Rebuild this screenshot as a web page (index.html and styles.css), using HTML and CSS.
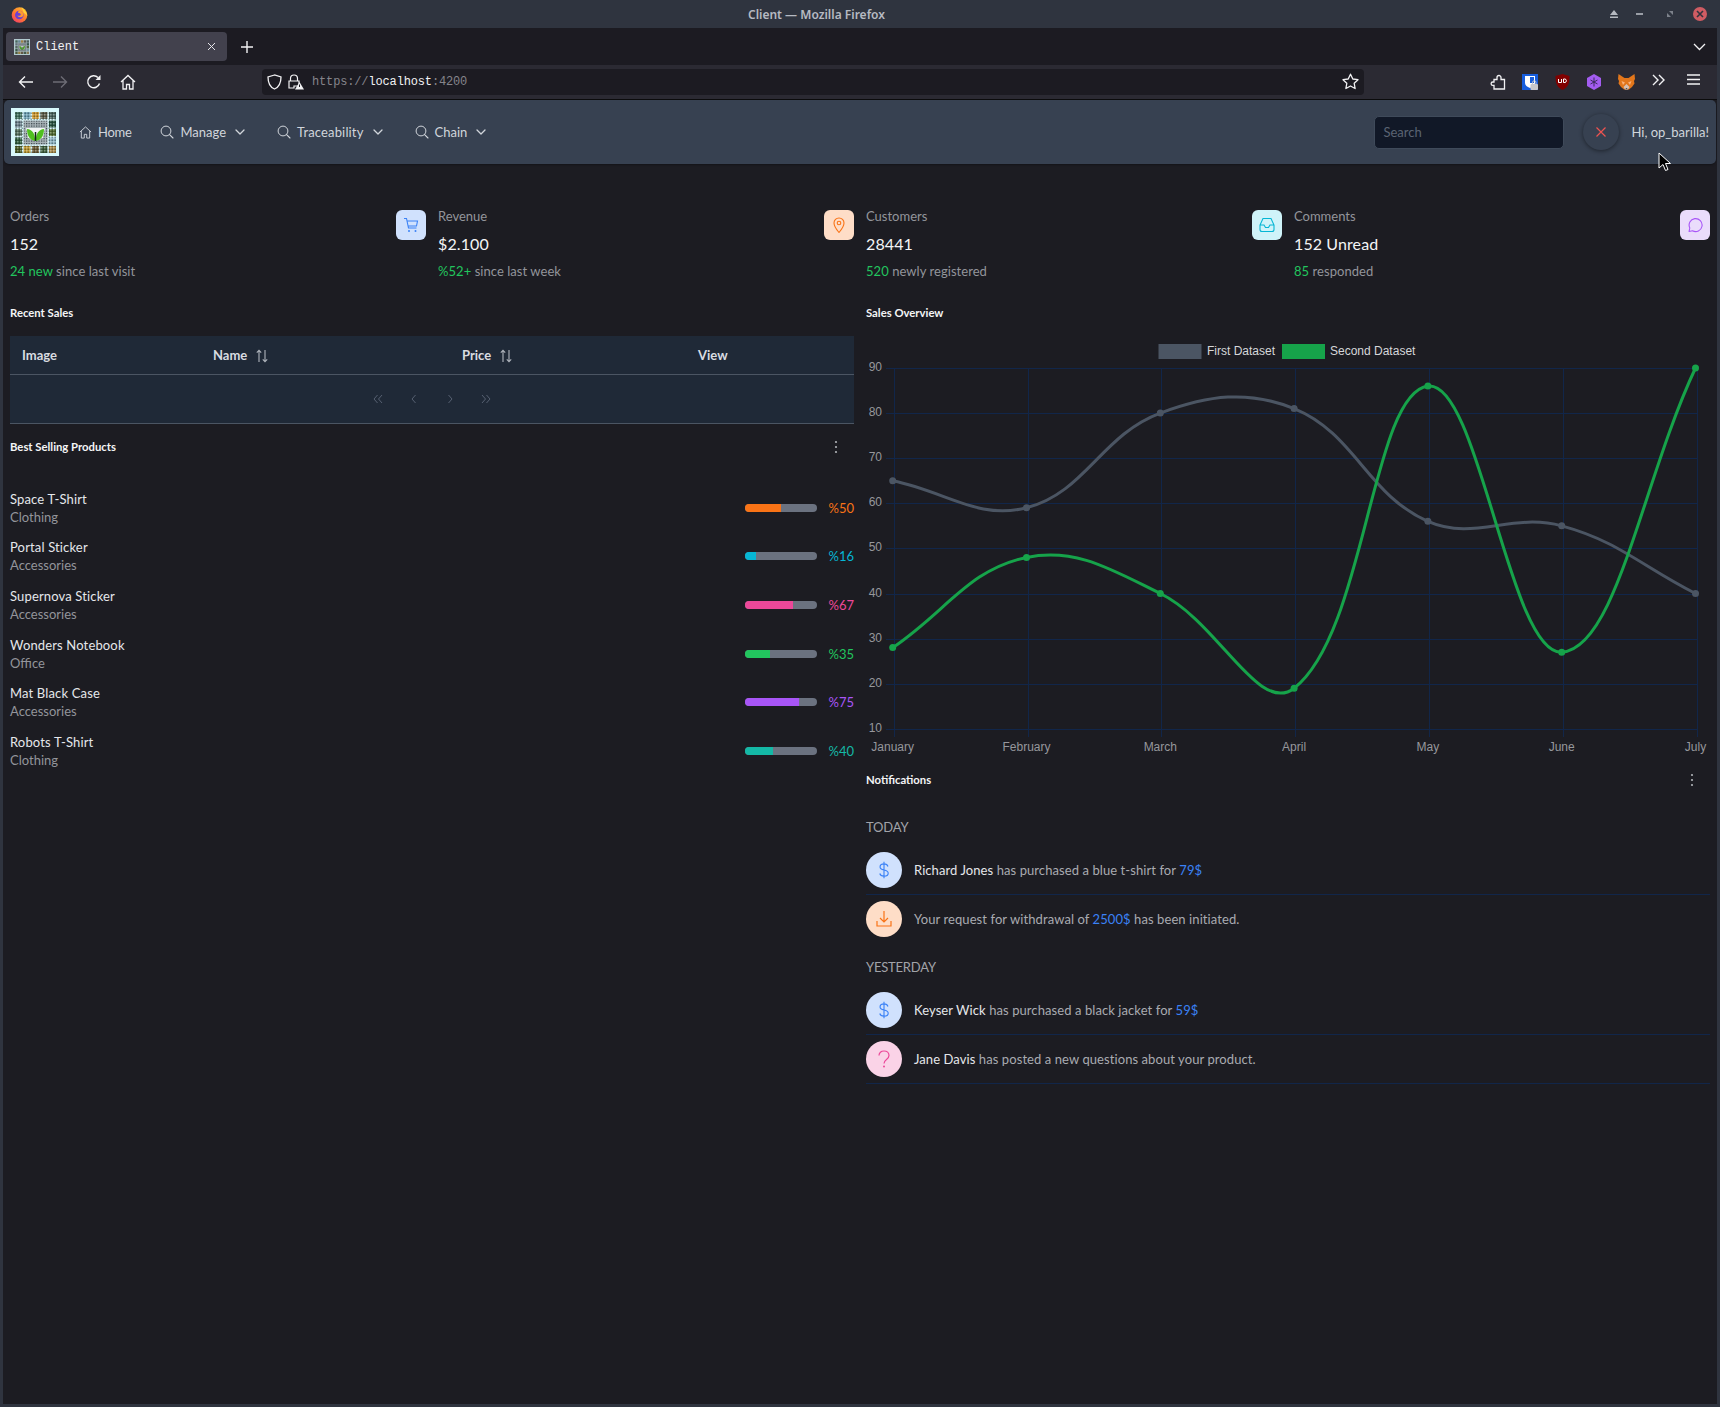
FILE: index.html
```html
<!DOCTYPE html>
<html lang="en">
<head>
    <meta charset="UTF-8">
    <title>Client — Mozilla Firefox</title>
    <link rel="stylesheet" href="styles.css">
</head>
<body>
    <!-- Shared drawings -->
    <svg class="defs">
        <defs>
            <pattern id="grain" width="3" height="3" patternUnits="userSpaceOnUse">
                <rect width="1.500" height="1.500" fill="#e8eef0" opacity="0.4"/>
                <rect x="1.500" y="1.500" width="1.500" height="1.500" fill="#10181a" opacity="0.4"/>
            </pattern>
            <pattern id="qr" width="2.500" height="2.500" patternUnits="userSpaceOnUse">
                <rect width="2.500" height="2.500" fill="#a9b4b8"/>
                <rect width="1.250" height="1.250" fill="#3c464c"/>
            </pattern>
            <linearGradient id="ffRing" x1="0.800" y1="0" x2="0.100" y2="1">
                <stop offset="0" stop-color="#ffbd2e"/>
                <stop offset="0.5" stop-color="#ff7a2e"/>
                <stop offset="1" stop-color="#f2386e"/>
            </linearGradient>
        </defs>
        <symbol id="logo" viewBox="0 0 48 48">
            <rect width="48" height="48" fill="#d8f8fb"/>
            <rect x="4" y="4" width="7" height="7" fill="#3f6f5c"/><rect x="12.500" y="4" width="7" height="7" fill="#6fa3b8"/><rect x="21" y="4" width="7" height="7" fill="#d09a30"/><rect x="29.500" y="4" width="7" height="7" fill="#5c5a46"/><rect x="38" y="4" width="7" height="7" fill="#46605a"/>
            <rect x="4" y="12.500" width="7" height="7" fill="#6b7f8a"/><rect x="38" y="12.500" width="7" height="7" fill="#24503c"/>
            <rect x="4" y="21" width="7" height="7" fill="#56715e"/><rect x="38" y="21" width="7" height="7" fill="#4f6b2f"/>
            <rect x="4" y="29.500" width="7" height="7" fill="#2d5a3a"/><rect x="38" y="29.500" width="7" height="7" fill="#8cb4c4"/>
            <rect x="4" y="38" width="7" height="7" fill="#4a5a24"/><rect x="12.500" y="38" width="7" height="7" fill="#c09a30"/><rect x="21" y="38" width="7" height="7" fill="#6a5a34"/><rect x="29.500" y="38" width="7" height="7" fill="#3c5c38"/><rect x="38" y="38" width="7" height="7" fill="#a88a48"/>
            <rect x="4" y="4" width="41" height="41" fill="url(#grain)"/>
            <rect x="12.500" y="12.500" width="24" height="24" fill="url(#qr)"/>
            <path d="M15 20h19l-2 10-7.500 3L17 30z" fill="#f2f5f5"/>
            <path d="M24.200 33c-5.500-1-8.200-5-8.200-12 5 .5 8.200 4 8.200 12zM24.800 33c5.500-1 8.200-5 8.200-12-5 .5-8.200 4-8.200 12z" fill="#4fc01f"/>
            <path d="M24.500 33v-9" stroke="#142018" stroke-width="1.500"/>
        </symbol>
        <symbol id="search" viewBox="0 0 14 14"><circle cx="6" cy="6" r="4.900" fill="none" stroke="currentColor" stroke-width="1"/><path d="M9.600 9.600 13 13" stroke="currentColor" stroke-width="1.100" stroke-linecap="round"/></symbol>
        <symbol id="chevron" viewBox="0 0 10 6"><path d="M1 1l4 4 4-4" fill="none" stroke="currentColor" stroke-width="1.300" stroke-linecap="round" stroke-linejoin="round"/></symbol>
        <symbol id="sort" viewBox="0 0 14 14"><path d="M4 13V1.500M1.800 3.600 4 1.200l2.200 2.400M10 1v11.500M7.800 10.400l2.200 2.400 2.200-2.400" fill="none" stroke="currentColor" stroke-width="1.100"/></symbol>
        <symbol id="kebab" viewBox="0 0 4 14"><circle cx="2" cy="2" r="1.100" fill="currentColor"/><circle cx="2" cy="7" r="1.100" fill="currentColor"/><circle cx="2" cy="12" r="1.100" fill="currentColor"/></symbol>
        <symbol id="dollar" viewBox="0 0 16 20"><path d="M12.500 6C12 4 10.300 3 8 3S3.500 4.300 3.500 6.500 5.500 9.500 8 10s4.800 1.300 4.800 3.600S10.500 17 8 17s-4.300-1-4.800-3M8 .5v19" fill="none" stroke="currentColor" stroke-width="1.300"/></symbol>
    </svg>

    <div class="window">
        <!-- Window title -->
        <div class="titlebar">
            <svg class="ff-logo" width="17" height="17" viewBox="0 0 17 17"><circle cx="8.500" cy="9" r="7.800" fill="url(#ffRing)"/><path d="M10 0c.5 1.500 1.500 2 3 3.500s3 3.500 3.300 6.500c-1-1.500-2-2.500-3.500-3-.5-2-1.500-4-2.800-7z" fill="#ffd23a"/><circle cx="8.300" cy="9" r="4.300" fill="#6b3fd4"/><path d="M8.300 4.700c2 0 3.600 1.200 4.200 3 .2 2-1 3.500-3 3.500-1.500 0-2.700-.6-3.200-1.700 1.500.7 3.200.3 3.500-.8.200-1-1.200-1.600-2.300-1.600-.8-.7-.5-1.700.8-2.400z" fill="#ff9a2e"/></svg>
            <div class="title-text">Client — Mozilla Firefox</div>
            <div class="win-buttons">
                <svg width="10" height="10" viewBox="0 0 10 10"><path d="M5 1l4 5H1zM1 7.500h8V9H1z" fill="#b5b9c0"/></svg>
                <svg class="win-min" width="8" height="8" viewBox="0 0 8 8"><rect y="3" width="7" height="2" fill="#9a9ea6"/></svg>
                <svg class="win-max" width="8" height="8" viewBox="0 0 8 8"><path d="M3 1h4v4zM1 3l4 4H1z" fill="#7d828b"/></svg>
                <span class="win-close"><svg width="8" height="8" viewBox="0 0 8 8"><path d="M1 1l6 6M7 1 1 7" stroke="#2f343f" stroke-width="1.600"/></svg></span>
            </div>
        </div>

        <!-- Tabs -->
        <div class="tabstrip">
            <div class="tab">
                <svg class="favicon" width="16" height="16"><use href="#logo"/></svg>
                <span class="tab-title">Client</span>
                <svg class="tab-close" width="9" height="9" viewBox="0 0 9 9"><path d="M1 1l7 7M8 1 1 8" stroke="#e6e6ea" stroke-width="1"/></svg>
            </div>
            <svg class="new-tab" width="12" height="12" viewBox="0 0 12 12"><path d="M6 0v12M0 6h12" stroke="#f2f2f4" stroke-width="1.400"/></svg>
            <svg class="tab-list" width="13" height="8" viewBox="0 0 13 8"><path d="M1 1l5.500 5.500L12 1" fill="none" stroke="#f2f2f4" stroke-width="1.300"/></svg>
        </div>

        <!-- Browser toolbar -->
        <div class="toolbar">
            <span class="tool"><svg width="16" height="14" viewBox="0 0 16 14"><path d="M15 7H2M7 1.500 1.500 7 7 12.500" fill="none" stroke="#f2f2f4" stroke-width="1.400"/></svg></span>
            <span class="tool"><svg width="16" height="14" viewBox="0 0 16 14"><path d="M1 7h13M9 1.500 14.500 7 9 12.500" fill="none" stroke="#6d6c75" stroke-width="1.400"/></svg></span>
            <span class="tool"><svg width="16" height="16" viewBox="0 0 16 16"><path d="M13.500 9.500A6 6 0 1 1 12 3.500" fill="none" stroke="#f2f2f4" stroke-width="1.400"/><path d="M14.500 1v5h-5z" fill="#f2f2f4"/></svg></span>
            <span class="tool"><svg width="16" height="16" viewBox="0 0 16 16"><path d="M1 8l7-6.500L15 8M3 6.500V15h3.500v-4.500h3V15H13V6.500" fill="none" stroke="#f2f2f4" stroke-width="1.300"/></svg></span>
            <div class="urlbar">
                <svg width="15" height="16" viewBox="0 0 15 16"><path d="M7.500 1 1 3c0 6 1.500 10 6.500 12 5-2 6.500-6 6.500-12z" fill="none" stroke="#f2f2f4" stroke-width="1.300"/></svg>
                <svg class="url-lock" width="16" height="16" viewBox="0 0 16 16"><path d="M2.500 7V4.500a3.500 3.500 0 0 1 7 0V7M1 7h10v5H6v2H1z" fill="none" stroke="#f2f2f4" stroke-width="1.200"/><path d="M11.500 8 16 15.500H7z" fill="#f2f2f4"/><path d="M11.500 10.500v2.500" stroke="#1c1b22"/></svg>
                <span class="url-text">https://<b>localhost</b>:4200</span>
                <svg class="url-star" width="17" height="17" viewBox="0 0 17 17"><path d="M8.500 1.200 10.800 6l5.200.7-3.800 3.600.9 5.200-4.600-2.500-4.600 2.500.9-5.200L1 6.700 6.200 6z" fill="none" stroke="#f2f2f4" stroke-width="1.300" stroke-linejoin="round"/></svg>
            </div>
            <div class="ext-icons">
                <span class="tool-ext"><svg width="16" height="16" viewBox="0 0 16 16"><path d="M4 15H14.500V5.500H11V3.500a2 2 0 0 0-4 0v2H4V8H2.800a1.700 1.700 0 0 0 0 3.400H4z" fill="none" stroke="#f2f2f4" stroke-width="1.300"/></svg></span>
                <span class="tool-ext"><svg width="16" height="16" viewBox="0 0 16 16"><rect width="16" height="16" fill="#175ddc"/><path d="M3 2h10v7c0 2-2 4-5 5-3-1-5-3-5-5z" fill="#fff"/><path d="M8 3h4v6H8z" fill="#175ddc"/><rect x="8.500" y="10" width="7.500" height="6" rx="1" fill="#c8c8cc"/><path d="M10.500 10V8.500a1.700 1.700 0 0 1 3.500 0V10" fill="none" stroke="#c8c8cc"/></svg></span>
                <span class="tool-ext"><svg width="15" height="16" viewBox="0 0 15 16"><path d="M7.500 0 14.500 2c0 7-1 11-7 14-6-3-7-7-7-14z" fill="#800000"/><path d="M3.500 5v3.500h3V5M8.500 5v3.500h1.500a1.800 1.800 0 0 0 0-3.500z" fill="none" stroke="#fff" stroke-width="1"/></svg></span>
                <span class="tool-ext"><svg width="16" height="16" viewBox="0 0 16 16"><path d="M8 0l7 4v8l-7 4-7-4V4z" fill="#a35cf0"/><path d="M8 3.500v9M4.500 6l7 4M11.500 6l-7 4" stroke="#3a2a5a" stroke-width="1"/></svg></span>
                <span class="tool-ext"><svg width="17" height="16" viewBox="0 0 17 16"><path d="M.5 0 6.500 4h4l6-4 .5 5-1 2 .5 2.500L14 13l-3 2.500H6L3 13 .5 9.500 1 7 0 5z" fill="#e2761b"/><path d="M3.500 7 7 8.500 5 11zM13.500 7 10 8.500l2 2.500z" fill="#f9b27a"/><path d="M5.500 13l3-3 3 3-1.500 2.500H7z" fill="#d7c1b3"/><path d="M7.300 14h2.400l-1.200 1z" fill="#233447"/></svg></span>
                <span class="tool-ext"><svg width="14" height="12" viewBox="0 0 14 12"><path d="M1 1l5 5-5 5M7 1l5 5-5 5" fill="none" stroke="#f2f2f4" stroke-width="1.400"/></svg></span>
                <span class="tool-ext tool-menu"><svg width="13" height="11" viewBox="0 0 13 11"><path d="M0 1h13M0 5.500h13M0 10h13" stroke="#f2f2f4" stroke-width="1.300"/></svg></span>
            </div>
        </div>

        <div class="app">
            <!-- Topbar -->
            <nav class="navbar">
                <svg class="logo" width="48" height="48"><use href="#logo"/></svg>
                <a class="nav-item nav-first"><svg width="13" height="13" viewBox="0 0 14 14"><path d="M1 6.500 7 1l6 5.500M2.500 5.500V13h3.200V9h2.600v4h3.200V5.500" fill="none" stroke="currentColor" stroke-width="1"/></svg>Home</a>
                <a class="nav-item"><svg width="14" height="14"><use href="#search"/></svg>Manage<svg class="chev" width="10" height="6"><use href="#chevron"/></svg></a>
                <a class="nav-item nav-trace"><svg width="14" height="14"><use href="#search"/></svg>Traceability<svg class="chev" width="10" height="6"><use href="#chevron"/></svg></a>
                <a class="nav-item"><svg width="14" height="14"><use href="#search"/></svg>Chain<svg class="chev" width="10" height="6"><use href="#chevron"/></svg></a>
                <input class="nav-search" type="text" placeholder="Search">
                <button class="nav-close"><svg width="12" height="12" viewBox="0 0 12 12"><path d="M1.500 1.500l9 9M10.500 1.500l-9 9" stroke="#ef5350" stroke-width="1.200"/></svg></button>
                <span class="nav-user">Hi, op_barilla!</span>
            </nav>

            <main class="dashboard">
                <!-- Stat cards -->
                <section class="stats">
                    <div class="stat">
                        <div class="stat-body">
                            <div class="stat-label">Orders</div>
                            <div class="stat-value">152</div>
                            <div class="stat-sub"><span class="good">24 new</span> since last visit</div>
                        </div>
                        <div class="stat-icon bg-blue"><svg width="16" height="16" viewBox="0 0 16 16"><path d="M1 1.500h2.500l2 9.500h8M4 4h10.500l-1 5H5.200" fill="none" stroke="currentColor" stroke-width="1.100"/><circle cx="6" cy="14" r="1" fill="currentColor"/><circle cx="12.500" cy="14" r="1" fill="currentColor"/></svg></div>
                    </div>
                    <div class="stat">
                        <div class="stat-body">
                            <div class="stat-label">Revenue</div>
                            <div class="stat-value">$2.100</div>
                            <div class="stat-sub"><span class="good">%52+</span> since last week</div>
                        </div>
                        <div class="stat-icon bg-orange"><svg width="16" height="16" viewBox="0 0 16 16"><path d="M8 15.500C5 12 3 9 3 6a5 5 0 0 1 10 0c0 3-2 6-5 9.500z" fill="none" stroke="currentColor" stroke-width="1.100"/><circle cx="8" cy="6" r="1.800" fill="none" stroke="currentColor" stroke-width="1.100"/></svg></div>
                    </div>
                    <div class="stat">
                        <div class="stat-body">
                            <div class="stat-label">Customers</div>
                            <div class="stat-value">28441</div>
                            <div class="stat-sub"><span class="good">520</span> newly registered</div>
                        </div>
                        <div class="stat-icon bg-cyan"><svg width="16" height="16" viewBox="0 0 16 16"><path d="M4 1.500h8L15 8v4.500a2 2 0 0 1-2 2H3a2 2 0 0 1-2-2V8zM1 8h4l1.500 2.500h3L11 8h4" fill="none" stroke="currentColor" stroke-width="1.100"/></svg></div>
                    </div>
                    <div class="stat">
                        <div class="stat-body">
                            <div class="stat-label">Comments</div>
                            <div class="stat-value">152 Unread</div>
                            <div class="stat-sub"><span class="good">85</span> responded</div>
                        </div>
                        <div class="stat-icon bg-purple"><svg width="16" height="16" viewBox="0 0 16 16"><path d="M2 14.500l.8-3.500A6.500 6.500 0 1 1 5.500 13.800z" fill="none" stroke="currentColor" stroke-width="1.100" stroke-linejoin="round"/></svg></div>
                    </div>
                </section>

                <section class="column">
                    <h5 class="section-title">Recent Sales</h5>
                    <table class="sales-table">
                        <thead>
                            <tr>
                                <th class="col-image">Image</th>
                                <th class="col-name">Name <svg class="sort" width="14" height="14"><use href="#sort"/></svg></th>
                                <th class="col-price">Price <svg class="sort" width="14" height="14"><use href="#sort"/></svg></th>
                                <th class="col-view">View</th>
                            </tr>
                        </thead>
                        <tfoot>
                            <tr>
                                <td colspan="4">
                                    <div class="pager">
                                        <svg width="10" height="10" viewBox="0 0 10 10"><path d="M4.500 1 1 5l3.500 4M9 1 5.500 5 9 9"/></svg>
                                        <svg width="10" height="10" viewBox="0 0 10 10"><path d="M6.500 1 3 5l3.500 4"/></svg>
                                        <svg width="10" height="10" viewBox="0 0 10 10"><path d="M3.500 1 7 5 3.500 9"/></svg>
                                        <svg width="10" height="10" viewBox="0 0 10 10"><path d="M1 1l3.500 4L1 9M5.500 1 9 5 5.500 9"/></svg>
                                    </div>
                                </td>
                            </tr>
                        </tfoot>
                    </table>

                    <div class="section-head products-head">
                        <h5 class="section-title">Best Selling Products</h5>
                        <svg class="kebab" width="4" height="14"><use href="#kebab"/></svg>
                    </div>
                    <ul class="products">
                        <li class="product">
                            <div><div class="product-name">Space T-Shirt</div><div class="product-cat">Clothing</div></div>
                            <div class="product-rate c-orange"><div class="bar"><div class="bar-fill" style="width: 50%"></div></div><span class="pct">%50</span></div>
                        </li>
                        <li class="product">
                            <div><div class="product-name">Portal Sticker</div><div class="product-cat">Accessories</div></div>
                            <div class="product-rate c-cyan"><div class="bar"><div class="bar-fill" style="width: 16%"></div></div><span class="pct">%16</span></div>
                        </li>
                        <li class="product">
                            <div><div class="product-name">Supernova Sticker</div><div class="product-cat">Accessories</div></div>
                            <div class="product-rate c-pink"><div class="bar"><div class="bar-fill" style="width: 67%"></div></div><span class="pct">%67</span></div>
                        </li>
                        <li class="product">
                            <div><div class="product-name">Wonders Notebook</div><div class="product-cat">Office</div></div>
                            <div class="product-rate c-green"><div class="bar"><div class="bar-fill" style="width: 35%"></div></div><span class="pct">%35</span></div>
                        </li>
                        <li class="product">
                            <div><div class="product-name">Mat Black Case</div><div class="product-cat">Accessories</div></div>
                            <div class="product-rate c-purple"><div class="bar"><div class="bar-fill" style="width: 75%"></div></div><span class="pct">%75</span></div>
                        </li>
                        <li class="product">
                            <div><div class="product-name">Robots T-Shirt</div><div class="product-cat">Clothing</div></div>
                            <div class="product-rate c-teal"><div class="bar"><div class="bar-fill" style="width: 40%"></div></div><span class="pct">%40</span></div>
                        </li>
                    </ul>
                </section>

                <section class="column">
                    <h5 class="section-title">Sales Overview</h5>
                    <svg id="salesChart" class="chart" width="844" height="421" viewBox="0 0 844 421"></svg>

                    <div class="section-head">
                        <h5 class="section-title">Notifications</h5>
                        <svg class="kebab" width="4" height="14"><use href="#kebab"/></svg>
                    </div>
                    <div class="day day-first">TODAY</div>
                    <ul class="notes">
                        <li class="note">
                            <span class="note-icon bg-blue"><svg width="14" height="18"><use href="#dollar"/></svg></span>
                            <span class="note-text"><b>Richard Jones</b> has purchased a blue t-shirt for <em>79$</em></span>
                        </li>
                        <li class="note note-plain">
                            <span class="note-icon bg-orange"><svg width="16" height="18" viewBox="0 0 16 18"><path d="M8 1v11M4 8l4 4 4-4M1 11v5h14v-5" fill="none" stroke="currentColor" stroke-width="1.200"/></svg></span>
                            <span class="note-text">Your request for withdrawal of <em>2500$</em> has been initiated.</span>
                        </li>
                    </ul>
                    <div class="day">YESTERDAY</div>
                    <ul class="notes">
                        <li class="note">
                            <span class="note-icon bg-blue"><svg width="14" height="18"><use href="#dollar"/></svg></span>
                            <span class="note-text"><b>Keyser Wick</b> has purchased a black jacket for <em>59$</em></span>
                        </li>
                        <li class="note">
                            <span class="note-icon bg-pink"><svg width="14" height="18" viewBox="0 0 14 18"><path d="M2 5.500C2 3 4 1 7 1s5 2 5 4.500c0 4-5 4-5 8" fill="none" stroke="currentColor" stroke-width="1.200"/><circle cx="7" cy="16.500" r="1" fill="currentColor"/></svg></span>
                            <span class="note-text"><b>Jane Davis</b> has posted a new questions about your product.</span>
                        </li>
                    </ul>
                </section>
            </main>
        </div>
    </div>

    <!-- Mouse pointer -->
    <svg class="pointer" width="13" height="20" viewBox="0 0 13 20"><path d="M1 1v15l4-3.500 2.500 6 2.500-1-2.500-6H12.500z" fill="#000" stroke="#fff" stroke-width="1"/></svg>

    <script src="chart.js"></script>
</body>
</html>
```

FILE: styles.css
```css
* {
    box-sizing: border-box;
}
html, body {
    margin: 0;
    height: 100%;
}
body {
    background-color: #2f343f;
    font-family: Lato, "Open Sans", sans-serif;
    color: #e5e7eb;
    overflow: hidden;
}
.defs {
    position: absolute;
    width: 0;
    height: 0;
}
ul {
    list-style: none;
    margin: 0;
    padding: 0;
}
svg {
    display: block;
    flex-shrink: 0;
}
.window {
    display: flex;
    flex-direction: column;
    height: 1407px;
    padding: 0 3px 3px;
}

/* Window title */
.titlebar {
    display: flex;
    align-items: center;
    height: 28px;
    flex-shrink: 0;
    padding-left: 8px;
}
.title-text {
    margin-left: 720px;
    font-family: "Noto Sans", sans-serif;
    font-size: 12px;
    font-weight: 600;
    color: #b6bac2;
}
.win-buttons {
    display: flex;
    align-items: center;
    margin-left: auto;
    margin-right: 10px;
    gap: 17px;
}
.win-max {
    margin-left: 5px;
}
.win-close {
    display: flex;
    align-items: center;
    justify-content: center;
    width: 14px;
    height: 14px;
    margin-left: 2px;
    border-radius: 50%;
    background-color: #cf5c63;
}

/* Tabs */
.tabstrip {
    display: flex;
    align-items: center;
    height: 37px;
    flex-shrink: 0;
    padding-left: 3px;
    background-color: #1c1b22;
}
.tab {
    display: flex;
    align-items: center;
    width: 221px;
    height: 29px;
    padding: 0 8px;
    border-radius: 4px;
    background-color: #42414d;
}
.favicon {
    opacity: 0.75;
}
.tab-title {
    margin-left: 6px;
    font-family: "Liberation Mono", monospace;
    font-size: 12px;
    color: #f2f2f4;
}
.tab-close {
    margin-left: auto;
    margin-right: 3px;
}
.new-tab {
    margin-left: 14px;
}
.tab-list {
    margin-left: auto;
    margin-right: 11px;
}

/* Browser toolbar */
.toolbar {
    display: flex;
    align-items: center;
    height: 35px;
    flex-shrink: 0;
    padding: 0 7px 1px 6px;
    background-color: #2b2a33;
    border-bottom: 1px solid #0c0c0d;
}
.tool {
    display: flex;
    justify-content: center;
    width: 34px;
}
.urlbar {
    display: flex;
    align-items: center;
    width: 1102px;
    height: 26px;
    margin-left: 117px;
    padding: 0 5px;
    border-radius: 4px;
    background-color: #1c1b22;
}
.url-lock {
    margin-left: 6px;
}
.url-text {
    margin-left: 8px;
    font-family: "Liberation Mono", monospace;
    font-size: 12px;
    letter-spacing: -0.15px;
    color: #85848b;
}
.url-text b {
    font-weight: 400;
    color: #f2f2f4;
}
.url-star {
    margin-left: auto;
}
.ext-icons {
    display: flex;
    margin-left: auto;
}
.tool-ext {
    display: flex;
    justify-content: center;
    width: 32.200px;
}
.tool-menu {
    margin-left: 3px;
}

/* App */
.app {
    flex: 1;
    background-color: #1c1c22;
}
.navbar {
    display: flex;
    align-items: center;
    height: 64px;
    margin: 0 1px;
    padding: 0 7px;
    border-radius: 5px;
    background-color: #374151;
    box-shadow: 0 1px 2px rgba(0, 0, 0, 0.3);
    font-size: 13px;
    color: #d1d5db;
}
.nav-item {
    display: flex;
    align-items: center;
    gap: 6px;
    margin-right: 29px;
}
.nav-first {
    margin-left: 20px;
    letter-spacing: -0.3px;
}
.nav-trace {
    letter-spacing: 0.15px;
}
.chev {
    margin-left: 3px;
    margin-right: 3px;
}
.nav-search {
    width: 190px;
    height: 33px;
    margin-left: auto;
    padding: 0 8px;
    border: 1px solid #3f4a5a;
    border-radius: 5px;
    background-color: #111827;
    font-family: Lato, sans-serif;
    font-size: 13px;
    color: #e5e7eb;
}
.nav-search::placeholder {
    color: #5b6473;
}
.nav-close {
    display: flex;
    align-items: center;
    justify-content: center;
    width: 36px;
    height: 36px;
    margin-left: 19px;
    border: none;
    border-radius: 50%;
    background-color: #374151;
    box-shadow: 0 1px 4px rgba(0, 0, 0, 0.45);
}
.nav-user {
    margin-left: 12px;
}

/* Dashboard */
.dashboard {
    display: grid;
    grid-template-columns: 844px 844px;
    column-gap: 12px;
    padding: 46px 7px 0;
}
.stats {
    grid-column: 1 / 3;
    display: grid;
    grid-template-columns: repeat(4, 416px);
    column-gap: 12px;
}
.stat {
    display: flex;
    justify-content: space-between;
}
.stat-body {
    margin: -1px 0 1px;
}
.stat-label {
    font-size: 13px;
    line-height: 14px;
    color: #93959b;
}
.stat-value {
    margin-top: 11px;
    font-size: 16px;
    font-weight: 400;
    letter-spacing: 0.1px;
    line-height: 20px;
    color: #f4f5f6;
}
.stat-sub {
    margin-top: 9px;
    font-size: 13px;
    letter-spacing: 0.05px;
    line-height: 16px;
    color: #93959b;
}
.good {
    color: #22c55e;
}
.stat-icon {
    display: flex;
    align-items: center;
    justify-content: center;
    width: 30px;
    height: 30px;
    border-radius: 6px;
}
.bg-blue {
    background-color: #d0e1fd;
    color: #3b82f6;
}
.bg-orange {
    background-color: #feddc7;
    color: #f97316;
}
.bg-cyan {
    background-color: #cff3f9;
    color: #06b6d4;
}
.bg-purple {
    background-color: #eadcfb;
    color: #a855f7;
}
.bg-pink {
    background-color: #fad3e7;
    color: #ec4899;
}
.column {
    min-width: 0;
}
.section-title {
    margin: 26px 0 16px;
    font-size: 11.300px;
    font-weight: 700;
    line-height: 14px;
    color: #f4f5f6;
}
.section-head {
    display: flex;
    justify-content: space-between;
    align-items: center;
    height: 14px;
    margin-top: 16px;
}
.section-head .section-title {
    margin: 0;
}
.kebab {
    margin-right: 16px;
    color: #b0b3b8;
}

/* Recent sales table */
.sales-table {
    width: 100%;
    border-collapse: collapse;
    table-layout: fixed;
    background-color: #1f2937;
    font-size: 13px;
}
.sales-table th {
    height: 38px;
    padding: 0 0 0 12px;
    border-bottom: 1px solid #4b5563;
    font-weight: 700;
    text-align: left;
    color: #d9dce1;
}
.sort {
    display: inline-block;
    vertical-align: -3px;
    margin-left: 5px;
    color: #b0b5bd;
}
.col-image {
    width: 191px;
}
.col-name {
    width: 249px;
}
.col-price {
    width: 236px;
}
.sales-table td {
    height: 49px;
    padding: 0;
    border-bottom: 1px solid #4b5563;
}
.pager {
    display: flex;
    justify-content: center;
    gap: 26px;
}
.pager path {
    fill: none;
    stroke: #566071;
    stroke-width: 1;
}

/* Best selling products */
.products {
    margin-top: 30px;
}
.product {
    display: flex;
    justify-content: space-between;
    align-items: center;
    height: 48.600px;
}
.product-name {
    font-size: 13px;
    letter-spacing: 0.15px;
    line-height: 16px;
    color: #e5e7eb;
}
.product-cat {
    margin-top: 2px;
    font-size: 13px;
    line-height: 16px;
    color: #93959b;
}
.product-rate {
    display: flex;
    align-items: center;
    gap: 12px;
    color: inherit;
}
.bar {
    width: 72px;
    height: 8px;
    border-radius: 4px;
    background-color: #6b7280;
    overflow: hidden;
}
.bar-fill {
    height: 100%;
    background-color: currentColor;
}
.pct {
    font-size: 13px;
}
.c-orange {
    color: #f97316;
}
.c-cyan {
    color: #06b6d4;
}
.c-pink {
    color: #ec4899;
}
.c-green {
    color: #22c55e;
}
.c-purple {
    color: #a855f7;
}
.c-teal {
    color: #14b8a6;
}

/* Sales chart */
.chart text {
    font-family: "Liberation Sans", Arial, sans-serif;
    font-size: 12px;
}

/* Notifications */
.day {
    margin: 15px 0 11px;
    font-size: 13px;
    letter-spacing: -0.2px;
    line-height: 16px;
    color: #a1a3a9;
}
.day-first {
    margin-top: 32px;
}
.note {
    display: flex;
    align-items: center;
    gap: 12px;
    height: 49px;
    border-bottom: 1px solid #11264a;
}
.note-plain {
    border-bottom-color: transparent;
}
.note-icon {
    display: flex;
    align-items: center;
    justify-content: center;
    width: 36px;
    height: 36px;
    border-radius: 50%;
}
.note-text {
    font-size: 13px;
    letter-spacing: 0.08px;
    color: #a9abb1;
}
.note-text b {
    font-weight: 400;
    color: #e5e7eb;
}
.note-text em {
    font-style: normal;
    color: #3b82f6;
}

/* Mouse pointer */
.pointer {
    position: absolute;
    left: 1658px;
    top: 152px;
}
```

FILE: chart.js
```js
// Sales chart, same curve maths as a tension 0.4 line chart
const chart = document.getElementById('salesChart');
const NS = 'http://www.w3.org/2000/svg';

const labels = ['January', 'February', 'March', 'April', 'May', 'June', 'July'];
const datasets = [
    { color: '#4b5563', data: [65, 59, 80, 81, 56, 55, 40] },
    { color: '#16a34a', data: [28, 48, 40, 19, 86, 27, 90] },
];

const gridColor = '#11264a';
const tickColor = '#96979c';

function add(tag, attrs, text) {
    const el = document.createElementNS(NS, tag);
    for (const key in attrs) el.setAttribute(key, attrs[key]);
    if (text) el.textContent = text;
    chart.appendChild(el);
    return el;
}

function pointX(i) {
    return 26.7 + 133.8 * i;
}

function pointY(value) {
    return 32 + (90 - value) * 4.51;
}

// Grid and ticks
for (let v = 90; v >= 10; v -= 10) {
    const y = Math.round(pointY(v)) + 0.5;
    add('line', { x1: 20, x2: 831.5, y1: y, y2: y, stroke: gridColor });
    add('text', { x: 16, y: y - 0.5, fill: tickColor, 'text-anchor': 'end', 'dominant-baseline': 'middle' }, String(v));
}
labels.forEach((label, i) => {
    const x = Math.round(pointX(i) + 1) + 0.5;
    add('line', { x1: x, x2: x, y1: 32, y2: 401, stroke: gridColor });
    add('text', { x: pointX(i), y: 412, fill: tickColor, 'text-anchor': 'middle', 'dominant-baseline': 'middle' }, label);
});

// Legend
add('rect', { x: 292.5, y: 8, width: 43, height: 15, fill: datasets[0].color });
add('text', { x: 341, y: 15.5, fill: '#d6d7da', 'dominant-baseline': 'middle' }, 'First Dataset');
add('rect', { x: 416, y: 8, width: 43, height: 15, fill: datasets[1].color });
add('text', { x: 464, y: 15.5, fill: '#d6d7da', 'dominant-baseline': 'middle' }, 'Second Dataset');

// Control points for one point of the curve
function controls(prev, cur, next) {
    const d1 = Math.hypot(cur.x - prev.x, cur.y - prev.y);
    const d2 = Math.hypot(next.x - cur.x, next.y - cur.y);
    const s1 = d1 / (d1 + d2 || 1);
    const s2 = d2 / (d1 + d2 || 1);
    return {
        before: { x: cur.x - 0.4 * s1 * (next.x - prev.x), y: cur.y - 0.4 * s1 * (next.y - prev.y) },
        after: { x: cur.x + 0.4 * s2 * (next.x - prev.x), y: cur.y + 0.4 * s2 * (next.y - prev.y) },
    };
}

datasets.forEach((set) => {
    const pts = set.data.map((v, i) => ({ x: pointX(i), y: pointY(v) }));
    const cps = pts.map((p, i) => controls(pts[i - 1] || p, p, pts[i + 1] || p));
    let d = `M${pts[0].x} ${pts[0].y}`;
    for (let i = 1; i < pts.length; i++) {
        const a = cps[i - 1].after;
        const b = cps[i].before;
        d += ` C${a.x} ${a.y} ${b.x} ${b.y} ${pts[i].x} ${pts[i].y}`;
    }
    add('path', { d: d, fill: 'none', stroke: set.color, 'stroke-width': 3 });
    pts.forEach((p) => add('circle', { cx: p.x, cy: p.y, r: 3.5, fill: set.color }));
});
```
